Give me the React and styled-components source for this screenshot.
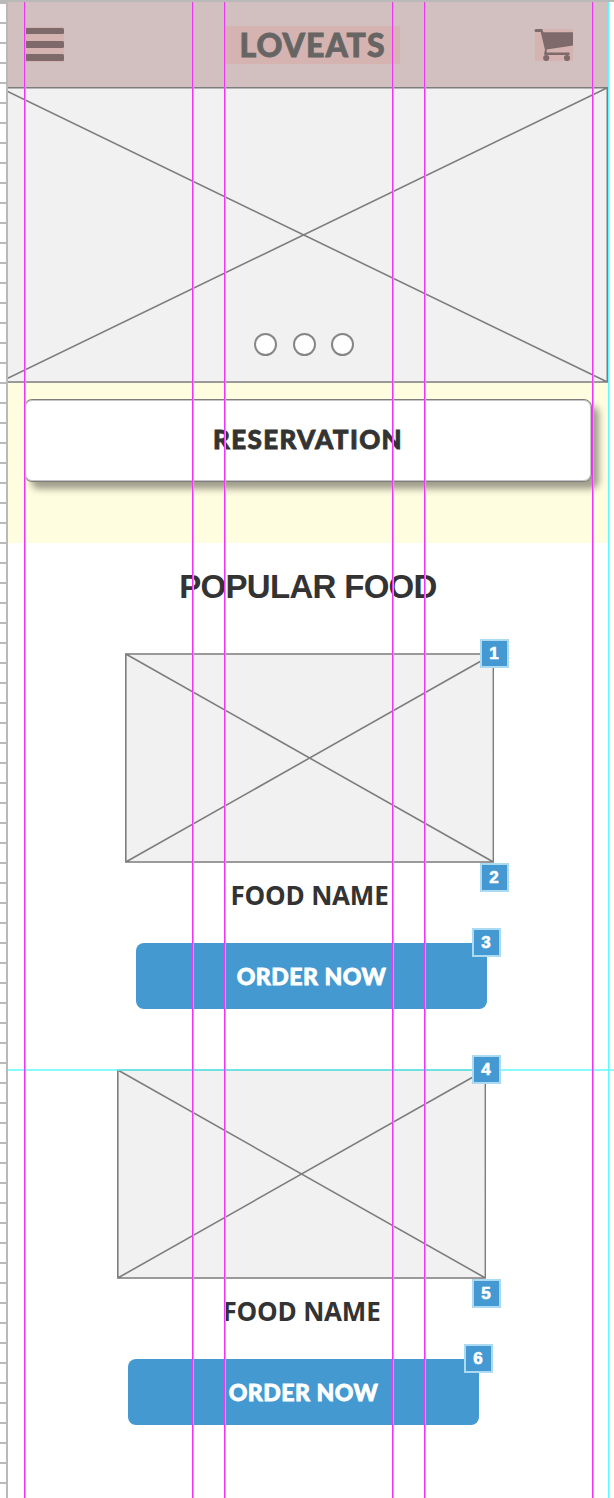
import React from "react";
import styled, { createGlobalStyle } from "styled-components";

const GlobalStyle = createGlobalStyle`
  * { box-sizing: border-box; }
  body { margin: 0; background: #fff; overflow: hidden; }
`;

const Editor = styled.div`
  position: relative;
  display: grid;
  grid-template-columns: 8px 600px 1fr;
  width: 614px;
  height: 1498px;
  overflow: hidden;
  border-top: 2px solid #b9b9b7;
  color: #333;
`;

const Ruler = styled.div`
  margin-top: -2px;
  border-right: 2px solid #b9b9b9;
  background: repeating-linear-gradient(
    to bottom, #fff 0 2px, #b9b9b9 2px 4px, #fff 4px 20px
  );
`;

const Page = styled.main`
  display: flex;
  flex-direction: column;
  min-width: 0;
`;

const Header = styled.header`
  display: flex;
  align-items: flex-start;
  height: 85px;
  padding: 24px 0 0 17px;
  background: #d2bfbf;
`;

const MenuButton = styled.button`
  display: flex;
  flex-direction: column;
  justify-content: space-between;
  width: 39px;
  height: 34.5px;
  margin: 1px 0 0;
  padding: 0.5px 0;
  border: 0;
  background: #d4b3b1;
`;

const MenuBar = styled.span`
  height: 6.6px;
  border-radius: 1.5px;
  background: #7e6a6b;
`;

const Logo = styled.h1`
  display: flex;
  align-items: center;
  justify-content: center;
  width: 175px;
  height: 38px;
  margin: 0 0 0 161px;
  background: #d4b3b1;
  color: #666564;
  font: 900 32px/38px Lato, sans-serif;
  letter-spacing: 1px;
  -webkit-text-stroke: 0.8px currentColor;
`;

const CartIcon = styled.svg`
  width: 39px;
  height: 32px;
  margin: 3px 0 0 134px;
`;

const Hero = styled.section`
  display: flex;
  position: relative;
  height: 296px;
  background: #f1f1f1;
`;

const Cross = styled.svg`
  display: block;
  width: 100%;
  height: 100%;
`;

const Dots = styled.div`
  position: absolute;
  left: 246px;
  bottom: 27px;
  display: flex;
  gap: 15.5px;
`;

const Dot = styled.span`
  width: 23px;
  height: 23px;
  border: 2px solid #868686;
  border-radius: 50%;
  background: #fff;
`;

const Promo = styled.section`
  height: 160px;
  padding: 16px 16px 0;
  background: #fffddf;
`;

const Reservation = styled.button`
  display: flex;
  align-items: center;
  justify-content: center;
  width: 568px;
  height: 83px;
  padding: 0 0 3px;
  border: 1px solid #7d7d7d;
  border-radius: 8px;
  background: #fff;
  box-shadow: inset 0 0 0 1px #c4c4c4, 7px 7px 7px rgba(0, 0, 0, 0.38);
  color: #333;
  font: 900 26px/30px Lato, sans-serif;
  letter-spacing: 1.35px;
  -webkit-text-stroke: 0.8px currentColor;
`;

const Heading = styled.h2`
  margin: 24px 0 0;
  height: 86px;
  text-align: center;
  font: bold 33px/40px "Liberation Sans", sans-serif;
  letter-spacing: -0.7px;
`;

const Card = styled.article`
  position: relative;
  flex: none;
  width: 369px;
  height: 416px;
  margin-left: ${(p) => p.$indent}px;
`;

const Photo = styled.div`
  height: 210px;
  background: #f1f1f1;
`;

const FoodName = styled.h3`
  height: 80px;
  margin: 0;
  padding-top: 16px;
  text-align: center;
  font: bold 26px/32px "Open Sans", sans-serif;
  letter-spacing: -0.2px;
`;

const OrderButton = styled.button`
  display: flex;
  align-items: center;
  justify-content: center;
  width: 351px;
  height: 65.5px;
  margin-left: 11px;
  padding: 0;
  border: 0;
  border-radius: 8px;
  background: #4499d1;
  color: #fff;
  font: 900 23px/28px Lato, sans-serif;
  letter-spacing: 0.5px;
  -webkit-text-stroke: 0.8px currentColor;
`;

const Badge = styled.span`
  position: absolute;
  z-index: 3;
  left: ${(p) => p.$x}px;
  top: ${(p) => p.$y}px;
  display: flex;
  align-items: center;
  justify-content: center;
  width: 29px;
  height: 29px;
  padding-right: 1px;
  border: 2px solid #acdaf0;
  background: #4499d3;
  color: #fff;
  font: bold 17px/20px "Liberation Sans", sans-serif;
  -webkit-text-stroke: 0.6px currentColor;
`;

const ColumnGuide = styled.i`
  position: absolute;
  z-index: 2;
  top: 0;
  bottom: 0;
  left: ${(p) => p.$x}px;
  width: 2px;
  background: linear-gradient(to right, #ee36f6 50%, #f48cf8 50%);
`;

const EdgeGuide = styled.i`
  position: absolute;
  z-index: 2;
  top: 0;
  bottom: 0;
  left: 608px;
  width: 2px;
  background: linear-gradient(to right, #62f7f8 50%, #a5f9fb 50%);
`;

const FoldGuide = styled.i`
  position: absolute;
  z-index: 1;
  top: 1067px;
  left: 8px;
  right: 0;
  height: 2px;
  background: rgba(96, 250, 250, 0.75);
`;

function FoodCard({ indent, first }) {
  return (
    <Card $indent={indent}>
      <Photo>
        <Cross viewBox="0 0 369 210" fill="none" stroke="#7d7d7d" strokeWidth="1.6">
          <path d="M.8 1H368.4V209H.8ZM.8 1L368.4 209M368.4 1L.8 209" />
        </Cross>
      </Photo>
      <FoodName>FOOD NAME</FoodName>
      <OrderButton>ORDER NOW</OrderButton>
      <Badge $x={355} $y={-14}>{first}</Badge>
      <Badge $x={355} $y={210}>{first + 1}</Badge>
      <Badge $x={347} $y={275}>{first + 2}</Badge>
    </Card>
  );
}

export default function App() {
  return (
    <>
      <GlobalStyle />
      <Editor>
        <Ruler />
        <Page>
          <Header>
            <MenuButton aria-label="Menu">
              <MenuBar />
              <MenuBar />
              <MenuBar />
            </MenuButton>
            <Logo>LOVEATS</Logo>
            <CartIcon viewBox="0 0 39 32">
              <path d="M1 0H39V32H1Z" fill="#d4b3b1" />
              <path
                d="M2 0H8.2L9.4 3.3H39V16.6L12.6 20.5L12.8 23.4H35.2Q36.5 24.7 35.2 26H10.7Q9.7 25.5 10.2 24.2L11 20.7L6.7 3H2Q.5 3 .5 1.5T2 0Z"
                fill="#7e6a6b"
              />
              <circle cx="12.2" cy="29" r="3.1" fill="#7e6a6b" />
              <circle cx="33" cy="29" r="3.1" fill="#7e6a6b" />
            </CartIcon>
          </Header>
          <Hero>
            <Cross viewBox="0 0 600 296" fill="none" stroke="#7d7d7d" strokeWidth="1.6">
              <path d="M-8 .8H599.3V295H-8ZM-8 .8L599.3 295M599.3 .8L-8 295" />
            </Cross>
            <Dots>
              <Dot />
              <Dot />
              <Dot />
            </Dots>
          </Hero>
          <Promo>
            <Reservation>RESERVATION</Reservation>
          </Promo>
          <Heading>POPULAR FOOD</Heading>
          <FoodCard indent={117} first={1} />
          <FoodCard indent={109} first={4} />
        </Page>
        {[24, 192, 224, 392, 424, 592].map((x) => (
          <ColumnGuide key={x} $x={x} />
        ))}
        <EdgeGuide />
        <FoldGuide />
      </Editor>
    </>
  );
}
